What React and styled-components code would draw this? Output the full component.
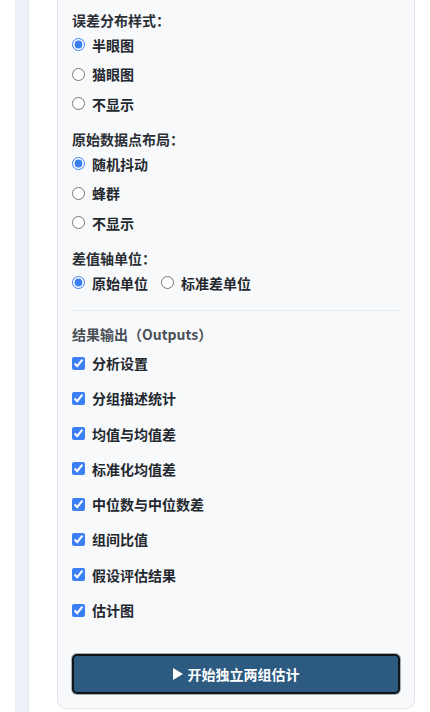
import React, { useState } from 'react'
import styled, { createGlobalStyle } from 'styled-components'

const GlobalStyle = createGlobalStyle`
    html, body {
        margin: 0;
        padding: 0;
        background: #ffffff;
    }

    body {
        font-family: "Noto Sans CJK SC", "Noto Sans", "Liberation Sans", sans-serif;
        color: #23282e;
    }
`

const Layout = styled.div`
    display: flex;
    min-height: 712px;
`

const Gutter = styled.div`
    width: 15px;
    flex: none;
`

const Rail = styled.div`
    width: 14px;
    flex: none;
    background: #eef1f7;
    border-right: 1px solid #e6eaf1;
    box-sizing: border-box;
`

const Sidebar = styled.div`
    flex: 1;
    padding: 0 15px 3px 28px;
`

const Panel = styled.div`
    background: #f8f9fb;
    border: 1px solid #e2e6eb;
    border-top: none;
    border-radius: 0 0 9px 9px;
    padding: 10px 14px 14px 14px;
`

const Group = styled.div`
    display: flex;
    flex-direction: column;
    gap: 9.5px;
    margin-top: ${p => (p.$first ? '0' : '15.5px')};
`

const GroupLabel = styled.div`
    font-size: 14px;
    line-height: 20px;
    font-weight: 700;
    color: #2a2f35;
    margin-bottom: -5px;
`

const Options = styled.div`
    display: flex;
    flex-direction: ${p => (p.$inline ? 'row' : 'column')};
    gap: ${p => (p.$inline ? '13px' : '9.5px')};
`

const Option = styled.label`
    display: inline-flex;
    align-items: center;
    gap: 7px;
    font-size: 14px;
    line-height: 20px;
    font-weight: 600;
    color: #23282e;
    cursor: pointer;

    input {
        margin: 0;
        width: 13px;
        height: 13px;
        accent-color: #3b7ff5;
        flex: none;
    }
`

const Divider = styled.hr`
    border: none;
    height: 1.5px;
    background: #e8ebef;
    margin: 17px 0 13px 0;
`

const SectionTitle = styled.div`
    font-size: 14px;
    line-height: 20px;
    font-weight: 600;
    color: #4a5058;
    margin-bottom: 9px;
`

const Checks = styled.div`
    display: flex;
    flex-direction: column;
    gap: 15.3px;
`

const RunButton = styled.button`
    display: flex;
    align-items: center;
    justify-content: center;
    gap: 5px;
    width: 100%;
    height: 40px;
    margin-top: 34px;
    background: #2c5a80;
    color: #ffffff;
    border: 2px solid #101418;
    border-radius: 5px;
    box-shadow: 0 0 0 1px #a5adb6;
    font-family: inherit;
    font-size: 14px;
    font-weight: 700;
    cursor: pointer;
`

const Triangle = styled.span`
    width: 0;
    height: 0;
    border-top: 6px solid transparent;
    border-bottom: 6px solid transparent;
    border-left: 10px solid #ffffff;
`

const errorStyles = ['半眼图', '猫眼图', '不显示']
const pointLayouts = ['随机抖动', '蜂群', '不显示']
const axisUnits = ['原始单位', '标准差单位']
const outputs = [
    '分析设置',
    '分组描述统计',
    '均值与均值差',
    '标准化均值差',
    '中位数与中位数差',
    '组间比值',
    '假设评估结果',
    '估计图',
]

const RadioGroup = ({ name, label, items, value, onChange, inline, first }) => (
    <Group $first={first}>
        <GroupLabel>{label}</GroupLabel>
        <Options $inline={inline}>
            {items.map(item => (
                <Option key={item}>
                    <input
                        type="radio"
                        name={name}
                        checked={value === item}
                        onChange={() => onChange(item)}
                    />
                    {item}
                </Option>
            ))}
        </Options>
    </Group>
)

export default function App() {
    const [errorStyle, setErrorStyle] = useState('半眼图')
    const [pointLayout, setPointLayout] = useState('随机抖动')
    const [axisUnit, setAxisUnit] = useState('原始单位')
    const [checked, setChecked] = useState(() => outputs.map(() => true))

    const toggle = i => setChecked(c => c.map((v, j) => (j === i ? !v : v)))

    return (
        <>
            <GlobalStyle />
            <Layout>
                <Gutter />
                <Rail />
                <Sidebar>
                    <Panel>
                        <RadioGroup
                            first
                            name="error"
                            label="误差分布样式："
                            items={errorStyles}
                            value={errorStyle}
                            onChange={setErrorStyle}
                        />
                        <RadioGroup
                            name="points"
                            label="原始数据点布局："
                            items={pointLayouts}
                            value={pointLayout}
                            onChange={setPointLayout}
                        />
                        <RadioGroup
                            inline
                            name="unit"
                            label="差值轴单位："
                            items={axisUnits}
                            value={axisUnit}
                            onChange={setAxisUnit}
                        />

                        <Divider />

                        <SectionTitle>结果输出（Outputs）</SectionTitle>
                        <Checks>
                            {outputs.map((item, i) => (
                                <Option key={item}>
                                    <input
                                        type="checkbox"
                                        checked={checked[i]}
                                        onChange={() => toggle(i)}
                                    />
                                    {item}
                                </Option>
                            ))}
                        </Checks>

                        <RunButton>
                            <Triangle />
                            开始独立两组估计
                        </RunButton>
                    </Panel>
                </Sidebar>
            </Layout>
        </>
    )
}
